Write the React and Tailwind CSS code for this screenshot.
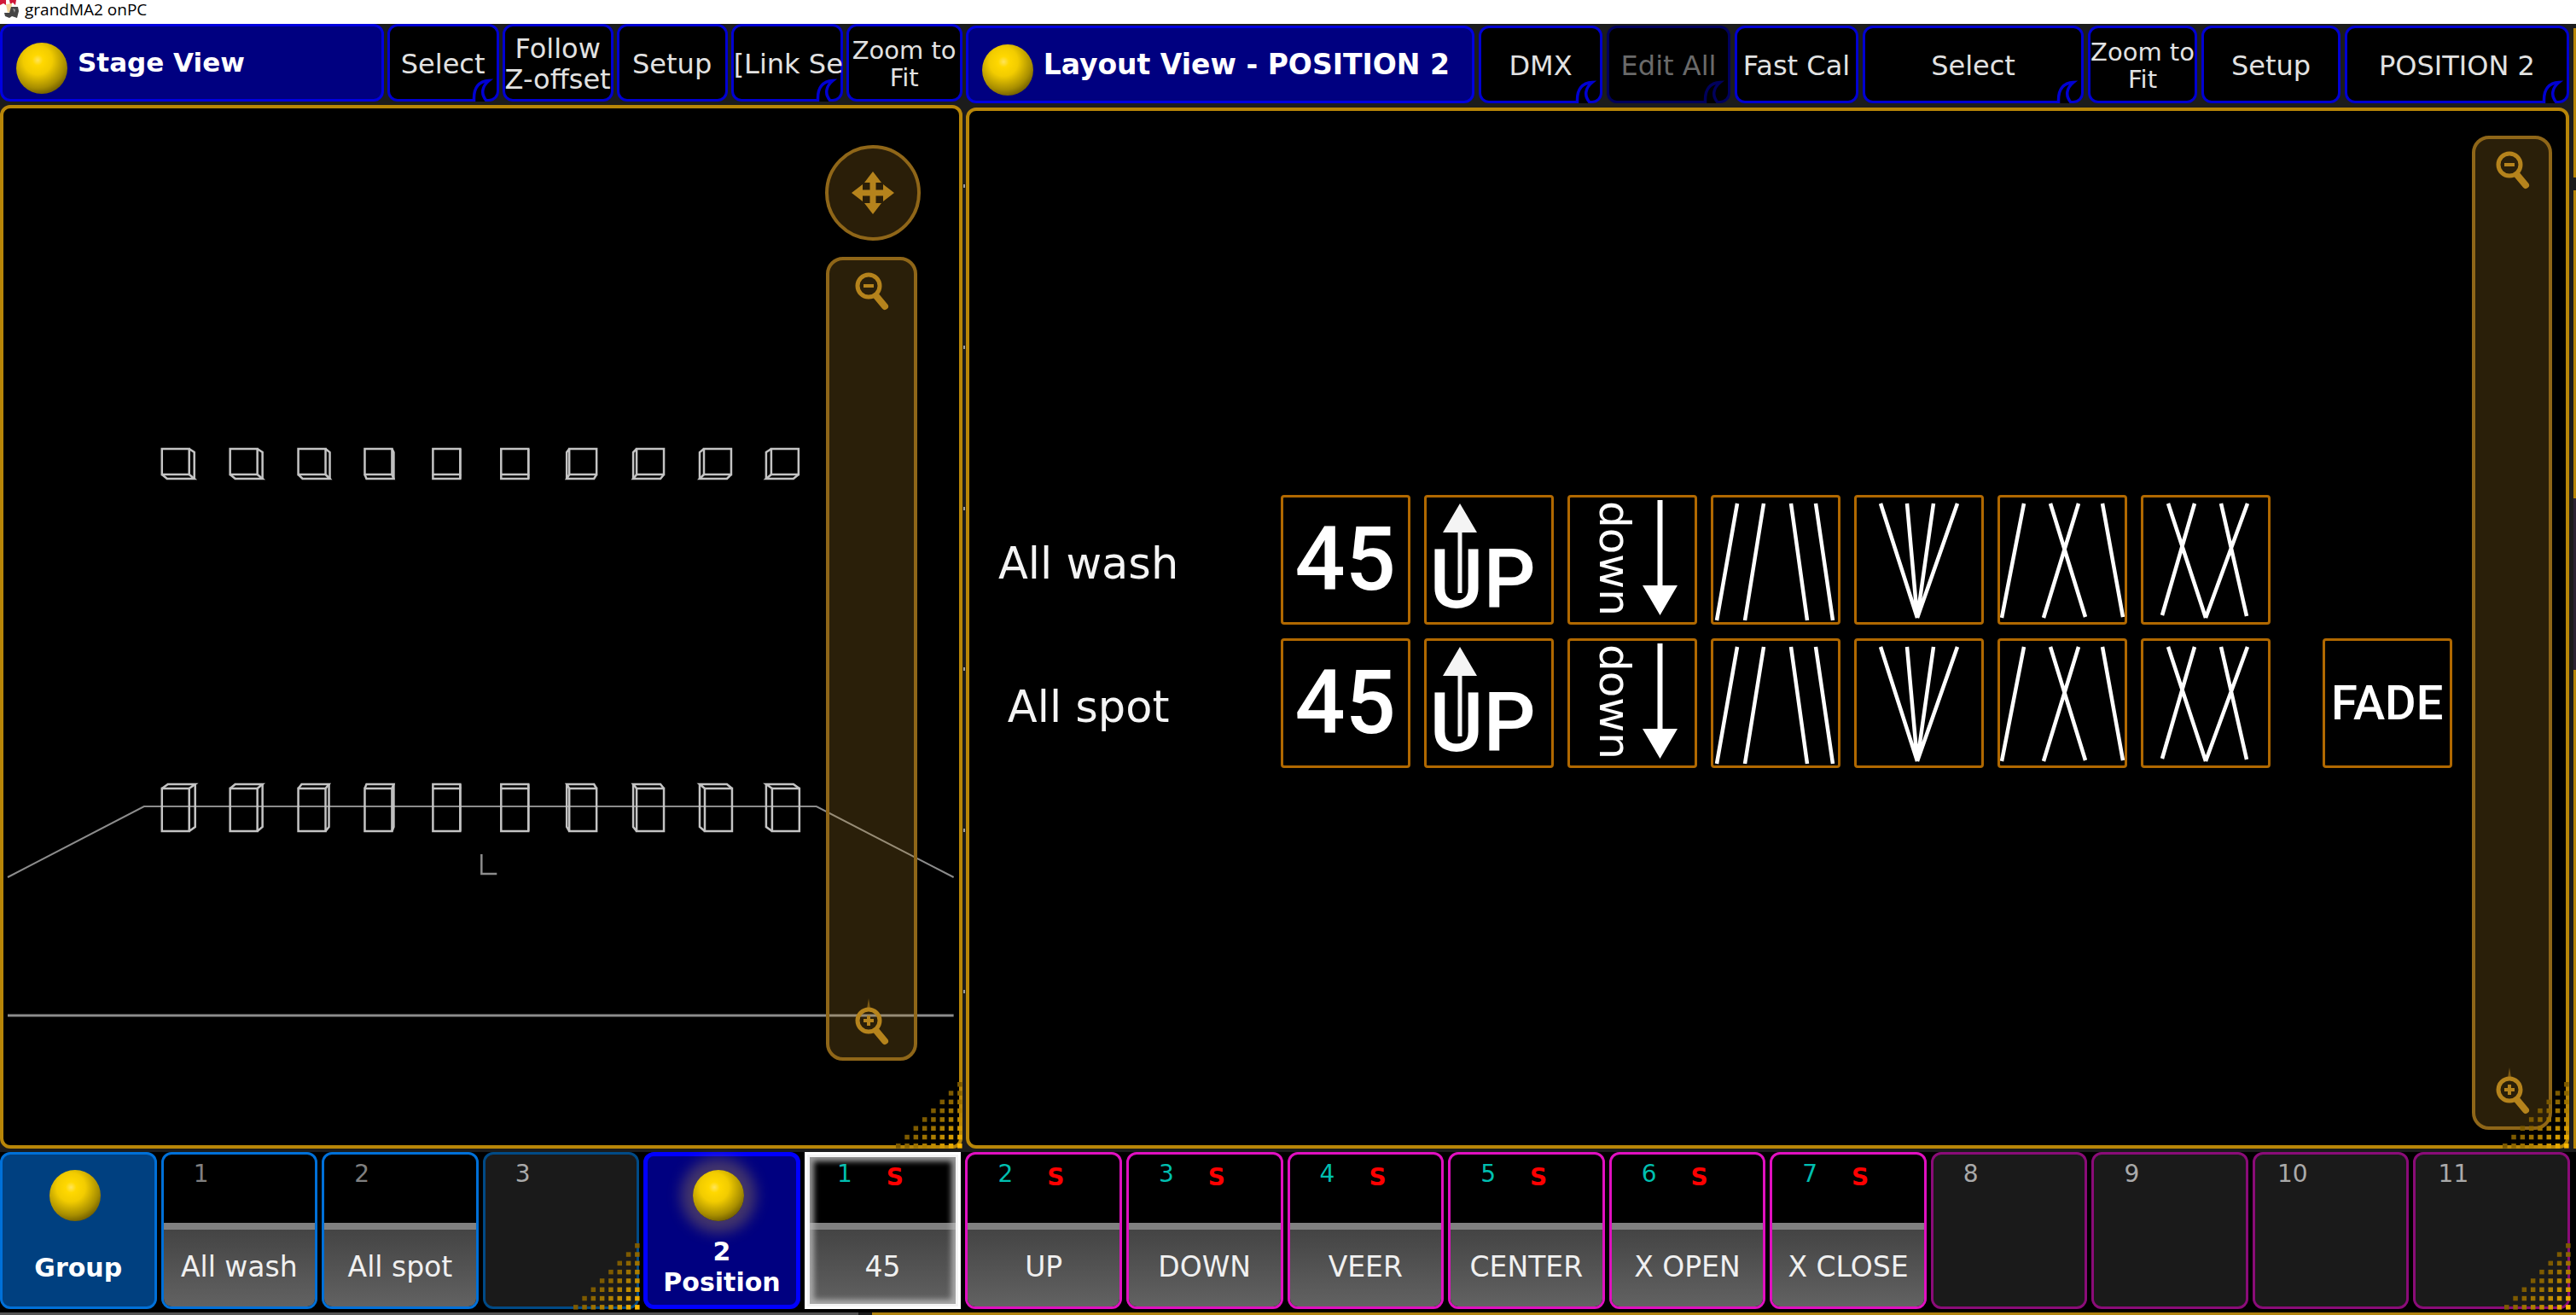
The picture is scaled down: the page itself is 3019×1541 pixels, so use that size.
import React from "react";

const SANS = "font-['DejaVu_Sans',sans-serif]";

function Ball({ glow }) {
  return (
    <span
      className={
        "block size-[60px] shrink-0 rounded-full bg-[radial-gradient(circle_at_42%_34%,#ffe45c_0%,#ffd800_12%,#f2cc00_32%,#a88e00_62%,#594a00_84%,#4a3c00_100%)] " +
        (glow ? "shadow-[0_0_16px_14px_rgba(150,120,80,0.45)]" : "")
      }
    />
  );
}

function Hook({ color }) {
  return (
    <svg
      className="absolute -right-[3px] -bottom-[3px]"
      width="34"
      height="28"
      viewBox="0 0 34 28"
      fill="none"
      aria-hidden="true"
    >
      <path d="M4.500 29V25C4.500 12 10 4 22 3.500C15 10 12 20 19 29Z" fill="#000" />
      <path
        d="M4.500 28V24C4.500 12 10 4 22 3.500C14 10 12 19 19 27"
        stroke={color}
        strokeWidth="3.500"
      />
    </svg>
  );
}

function BarButton({ children, width, hook, small, dim, start }) {
  return (
    <button
      className={
        "relative flex h-[91px] shrink-0 items-center rounded-[12px] border-[3px] bg-black pt-[2px] text-center whitespace-nowrap " +
        (dim ? "border-[#00005c] text-[#6a6a6a] " : "border-[#0000d2] text-[#e2e2e2] ") +
        (start ? "justify-start " : "justify-center ") +
        (small ? "text-[29px] leading-[32px] " : "text-[32px] leading-[36px] ") +
        width
      }
    >
      <span>{children}</span>
      {hook && <Hook color={dim ? "#00005c" : "#0000d2"} />}
    </button>
  );
}

function Title({ children, size }) {
  return (
    <h2
      className={
        "flex h-[91px] min-w-0 flex-1 items-center gap-[12px] overflow-hidden rounded-[12px] border-[3px] border-[#0000e0] bg-[#000080] pl-[16px] font-bold whitespace-nowrap text-white " +
        size
      }
    >
      <span className="pt-[12px]">
        <Ball />
      </span>
      <span>{children}</span>
    </h2>
  );
}

const DOT_SHADES = ["#7d5a00", "#8c6500", "#9c7100", "#ad7e00", "#c08c00", "#d49a00", "#e8a900", "#fcb800"];

function ResizeDots() {
  const dots = [];
  for (let r = 0; r < 8; r++) {
    for (let c = 7 - r; c < 8; c++) {
      dots.push(
        <rect key={r + "-" + c} x={c * 10.3 + 2} y={r * 10.3 + 2} width="5.500" height="5.500" fill={DOT_SHADES[r + c - 7]} />
      );
    }
  }
  return (
    <svg className="absolute -right-[6px] -bottom-[6px]" width="82" height="82" viewBox="0 0 82 82" aria-hidden="true">
      {dots}
    </svg>
  );
}

function Magnifier({ plus }) {
  return (
    <svg width="42" height="60" viewBox="0 0 42 60" fill="none" stroke="#b5831c" aria-hidden="true">
      {plus && <path d="M18 0L20 12H16Z" fill="#7a5814" stroke="none" />}
      <circle cx="18" cy="26" r="13" strokeWidth="5" />
      <path d="M12 26H24" strokeWidth="4" />
      {plus && <path d="M18 20V32" strokeWidth="4" />}
      <path d="M27 38L37 50" strokeWidth="8" strokeLinecap="round" />
    </svg>
  );
}

function ZoomStrip({ className }) {
  return (
    <div
      className={
        "absolute flex flex-col items-center justify-between rounded-[20px] border-[4px] border-[#8f6618] bg-[#c08c28]/22 pt-[4px] pb-[9px] " +
        className
      }
    >
      <button aria-label="Zoom out">
        <Magnifier />
      </button>
      <button aria-label="Zoom in">
        <Magnifier plus />
      </button>
    </div>
  );
}

const COLUMNS = [189, 269, 349, 427, 507, 587, 664, 742, 820, 898];
const UPPER_DEPTH = [6, 6, 5, 2, 0, 0, -3, -4, -5, -6];
const LOWER_DEPTH = [7, 6, 4, 2, 0, 0, -3, -4, -6, -7];

function StageDrawing() {
  return (
    <svg
      className="h-full w-full"
      viewBox="4 128 1121 1215"
      preserveAspectRatio="none"
      fill="none"
      stroke="#c4c4c4"
      strokeWidth="2.500"
      role="img"
      aria-label="Stage wireframe"
    >
      <g stroke="#8c8c8c">
        <path d="M9 1029L169 946H958L1119 1029" strokeWidth="2" />
        <path d="M9 1191H1119" strokeWidth="3" />
        <path d="M565 1002V1025H583" />
      </g>
      {COLUMNS.map((x, i) => {
        const d = UPPER_DEPTH[i];
        const fx = d < 0 ? x - d : x;
        return (
          <g key={x}>
            <rect x={fx + 1} y="527" width="32" height="30" />
            <path d={`M${fx + 1} 557L${fx + 1 + d} 562H${fx + 33 + d}L${fx + 33} 557`} />
            <path d={d < 0 ? `M${fx + 1 + d} 562V531L${fx + 1} 527` : `M${fx + 33 + d} 562V531L${fx + 33} 527`} />
          </g>
        );
      })}
      {COLUMNS.map((x, i) => {
        const d = LOWER_DEPTH[i];
        const fx = d < 0 ? x - d : x;
        return (
          <g key={x}>
            <rect x={fx + 1} y="925" width="32" height="50" />
            <path d={`M${fx + 1} 925L${fx + 1 + d} 920H${fx + 33 + d}L${fx + 33} 925`} />
            <path d={d < 0 ? `M${fx + 1 + d} 920V970L${fx + 1} 975` : `M${fx + 33 + d} 920V970L${fx + 33} 975`} />
          </g>
        );
      })}
    </svg>
  );
}

const BEAMS = {
  VEER: "M31 10L7 147M62 10L40 147M94 10L113 147M123 10L143 147",
  CENTER: "M31 10L74 144M62 10L74 144M93 10L74 144M121 10L74 144",
  "X OPEN": "M31 10L5 144M62 10L103 143M95 10L54 144M123 10L147 143",
  "X CLOSE": "M32 10L76 144M63 10L25 141M94 10L124 142M125 10L76 144",
};

function Tile({ kind }) {
  return (
    <button
      aria-label={kind}
      className="relative size-[152px] shrink-0 rounded-[4px] border-[3px] border-[#b06800] bg-black text-white"
    >
      {kind === "45" && (
        <span className="block text-center font-[Roboto,sans-serif] text-[104px] leading-[144px] font-medium">
          45
        </span>
      )}
      {kind === "UP" && (
        <>
          <span className="block pt-[46px] pr-[14px] text-center font-[Roboto,sans-serif] text-[96px] leading-[100px] font-medium">
            UP
          </span>
          <svg className="absolute inset-0" viewBox="3 3 146 146" aria-hidden="true">
            <path d="M42 10L62 44H44.500V115H39.500V44H22Z" fill="#f4f4f4" />
          </svg>
        </>
      )}
      {kind === "DOWN" && (
        <>
          <span className="block pb-[4px] pl-[27px] text-left text-[50px] leading-[50px] [writing-mode:vertical-rl]">
            down
          </span>
          <svg className="absolute inset-0" viewBox="3 3 146 146" aria-hidden="true">
            <path d="M105.500 6H111.500V106H129L108.500 141L88 106H105.500Z" fill="#fff" />
          </svg>
        </>
      )}
      {kind === "FADE" && (
        <span className="block text-center font-[Roboto,sans-serif] text-[56px] leading-[146px] font-medium">
          FADE
        </span>
      )}
      {BEAMS[kind] && (
        <svg className="absolute inset-0" viewBox="3 3 146 146" aria-hidden="true">
          <path d={BEAMS[kind]} stroke="#fff" strokeWidth="4.500" fill="none" />
        </svg>
      )}
    </button>
  );
}

const KINDS = ["45", "UP", "DOWN", "VEER", "CENTER", "X OPEN", "X CLOSE"];

function LayoutRow({ label, fade }) {
  return (
    <div className="flex items-center gap-[16px]">
      <span className="mr-[69px] w-[280px] pt-[10px] text-center text-[51px] leading-[60px] whitespace-nowrap text-[#f4f4f4]">
        {label}
      </span>
      {KINDS.map((k) => (
        <Tile key={k} kind={k} />
      ))}
      {fade && (
        <span className="ml-[45px]">
          <Tile kind="FADE" />
        </span>
      )}
    </div>
  );
}

function PoolHead({ label, active }) {
  return (
    <button
      className={
        "flex h-full flex-col items-center rounded-[12px] text-[30px] leading-[36px] font-bold text-white " +
        (active ? "border-[5px] border-[#0000ff] bg-[#000080] pt-[16px]" : "border-[3px] border-[#0070d8] bg-[#004080] pt-[18px]")
      }
    >
      <span className="pr-[8px]">
        <Ball glow={active} />
      </span>
      <span className={"whitespace-pre-line " + (active ? "pt-[18px]" : "pt-[37px]")}>{label}</span>
    </button>
  );
}

function PoolCell({ n, label, preset, selected, dots }) {
  let frame = preset ? "border-[#e010c0]" : "border-[#0070d8]";
  if (!label) frame = preset ? "border-[#8a0c78]" : "border-[#004a86]";
  if (selected) frame = "border-white";
  return (
    <button
      className={
        "relative flex h-full flex-col border-[3px] " +
        (selected ? "rounded-none " : "rounded-[12px] ") +
        (label ? "bg-black " : "bg-[#1a1a1a] ") +
        frame
      }
    >
      <span className="flex w-full flex-1 text-[28px] leading-[32px]">
        <span className={"w-[88px] pt-[7px] text-center " + (label && preset ? "text-[#00bfb0]" : label ? "text-[#808080]" : "text-[#aaaaaa]")}>
          {n}
        </span>
        {label && preset && <span className="w-[30px] pt-[11px] text-center font-bold text-[#ff0000]">S</span>}
      </span>
      {label && (
        <span
          className={
            "flex h-[98px] w-full items-center justify-center border-t-[8px] border-[#808080] bg-linear-to-b from-[#444444] to-[#626262] pb-[2px] text-[33px] leading-[36px] whitespace-nowrap text-[#f0f0f0] " +
            (selected ? "" : "rounded-b-[9px]")
          }
        >
          {label}
        </span>
      )}
      {selected && (
        <span className="absolute inset-0 border-[3px] border-[#f4f4f4] shadow-[inset_0_0_6px_5px_rgba(190,190,190,0.8)]" />
      )}
      {dots && <ResizeDots />}
    </button>
  );
}

function AppLogo() {
  return (
    <svg width="24" height="22" viewBox="0 0 24 22" aria-hidden="true">
      <path d="M0 0H7V6L4 4L0 6ZM11 0H19L18 6L15 3L12 5Z" fill="#d01838" />
      <path d="M7 5L14 4L13 13L9 15Z" fill="#f4d79a" />
      <path d="M13 8H21L22 13L20 21L14 19L11 21L6 19L5 15L11 15Z" fill="#454545" />
      <path d="M15 10L18 11L17 15Z" fill="#9a9a9a" />
    </svg>
  );
}

export default function App() {
  return (
    <div className={"flex min-h-screen flex-col bg-[#1c1c1c] " + SANS}>
      <header className="flex h-[28px] items-start bg-white">
        <AppLogo />
        <h1 className="pl-[5px] font-['Open_Sans',sans-serif] text-[19px] leading-[23px] text-black">grandMA2 onPC</h1>
      </header>

      <main className="flex flex-1">
        <div className="grid flex-1 grid-cols-[3fr_5fr] gap-[4px]">
          <section className="flex min-w-0 flex-col gap-[4px]">
            <div className="flex gap-[4px]">
              <Title size="text-[31px]">Stage View</Title>
              <BarButton width="w-[131px]" hook>Select</BarButton>
              <BarButton width="w-[130px]">
                Follow
                <br />
                Z-offset
              </BarButton>
              <BarButton width="w-[130px]">Setup</BarButton>
              <BarButton width="w-[131px]" hook start>[Link Se</BarButton>
              <BarButton width="w-[136px]" small>
                Zoom to
                <br />
                Fit
              </BarButton>
            </div>
            <div className="relative flex-1 rounded-[12px] border-[4px] border-[#b88608] bg-black">
              <div className="absolute inset-0">
                <StageDrawing />
              </div>
              <button
                aria-label="Pan"
                className="absolute top-[43px] right-[45px] flex size-[112px] items-center justify-center rounded-full border-[4px] border-[#8f6618] bg-[#2a1e08]"
              >
                <svg width="50" height="50" viewBox="0 0 50 50" fill="#b5831c" aria-hidden="true">
                  <path d="M25 0L35 13H28.500V21.500H37V15L50 25L37 35V28.500H28.500V37H35L25 50L15 37H21.500V28.500H13V35L0 25L13 15V21.500H21.500V13H15Z" />
                </svg>
              </button>
              <ZoomStrip className="top-[174px] right-[49px] bottom-[99px] w-[107px]" />
              <ResizeDots />
            </div>
          </section>

          <section className="relative flex min-w-0 flex-col gap-[5px] pt-[2px]">
            <div className="absolute top-[188px] bottom-[182px] -left-[3px] flex w-[2px] flex-col justify-between">
              {[0, 1, 2, 3, 4, 5].map((i) => (
                <span key={i} className="h-[4px] bg-[#a0a0a0]" />
              ))}
            </div>
            <div className="flex gap-[5px]">
              <Title size="text-[33px]">Layout View - POSITION 2</Title>
              <BarButton width="w-[145px]" hook>DMX</BarButton>
              <BarButton width="w-[145px]" hook dim>Edit All</BarButton>
              <BarButton width="w-[145px]">Fast Cal</BarButton>
              <BarButton width="w-[259px]" hook>Select</BarButton>
              <BarButton width="w-[128px]" small>
                Zoom to
                <br />
                Fit
              </BarButton>
              <BarButton width="w-[163px]">Setup</BarButton>
              <BarButton width="w-[263px]" hook>POSITION 2</BarButton>
            </div>
            <div className="relative flex flex-1 flex-col justify-center gap-[16px] rounded-[12px] border-[4px] border-[#b88608] bg-black pt-[8px]">
              <LayoutRow label="All wash" />
              <LayoutRow label="All spot" fade />
              <ZoomStrip className="top-[29px] right-[16px] bottom-[18px] w-[94px]" />
              <ResizeDots />
            </div>
          </section>
        </div>
        <div className="ml-[5px] flex w-[3px] flex-col pt-[5px]">
          <span className="h-[175px] bg-[#b88608]" />
          <span className="mt-[15px] flex-[36] bg-[#b88608]" />
          <span className="flex-[20] bg-[#2c2434]" />
          <span className="flex-[56] bg-[#b88608]" />
        </div>
      </main>

      <nav className="mt-[4px] grid h-[184px] grid-cols-16 gap-[5px] bg-black pr-[7px]">
        <PoolHead label="Group" />
        <PoolCell n="1" label="All wash" />
        <PoolCell n="2" label="All spot" />
        <PoolCell n="3" dots />
        <PoolHead label={"2\nPosition"} active />
        {KINDS.map((k, i) => (
          <PoolCell key={k} n={i + 1} label={k} preset selected={i === 0} />
        ))}
        <PoolCell n="8" preset />
        <PoolCell n="9" preset />
        <PoolCell n="10" preset />
        <PoolCell n="11" preset dots />
      </nav>

      <footer className="flex h-[7px] gap-[16px] border-t-[4px] border-black">
        <span className="w-1/3 bg-[#555555]" />
        <span className="flex-1 bg-[#b08410]" />
      </footer>
    </div>
  );
}
